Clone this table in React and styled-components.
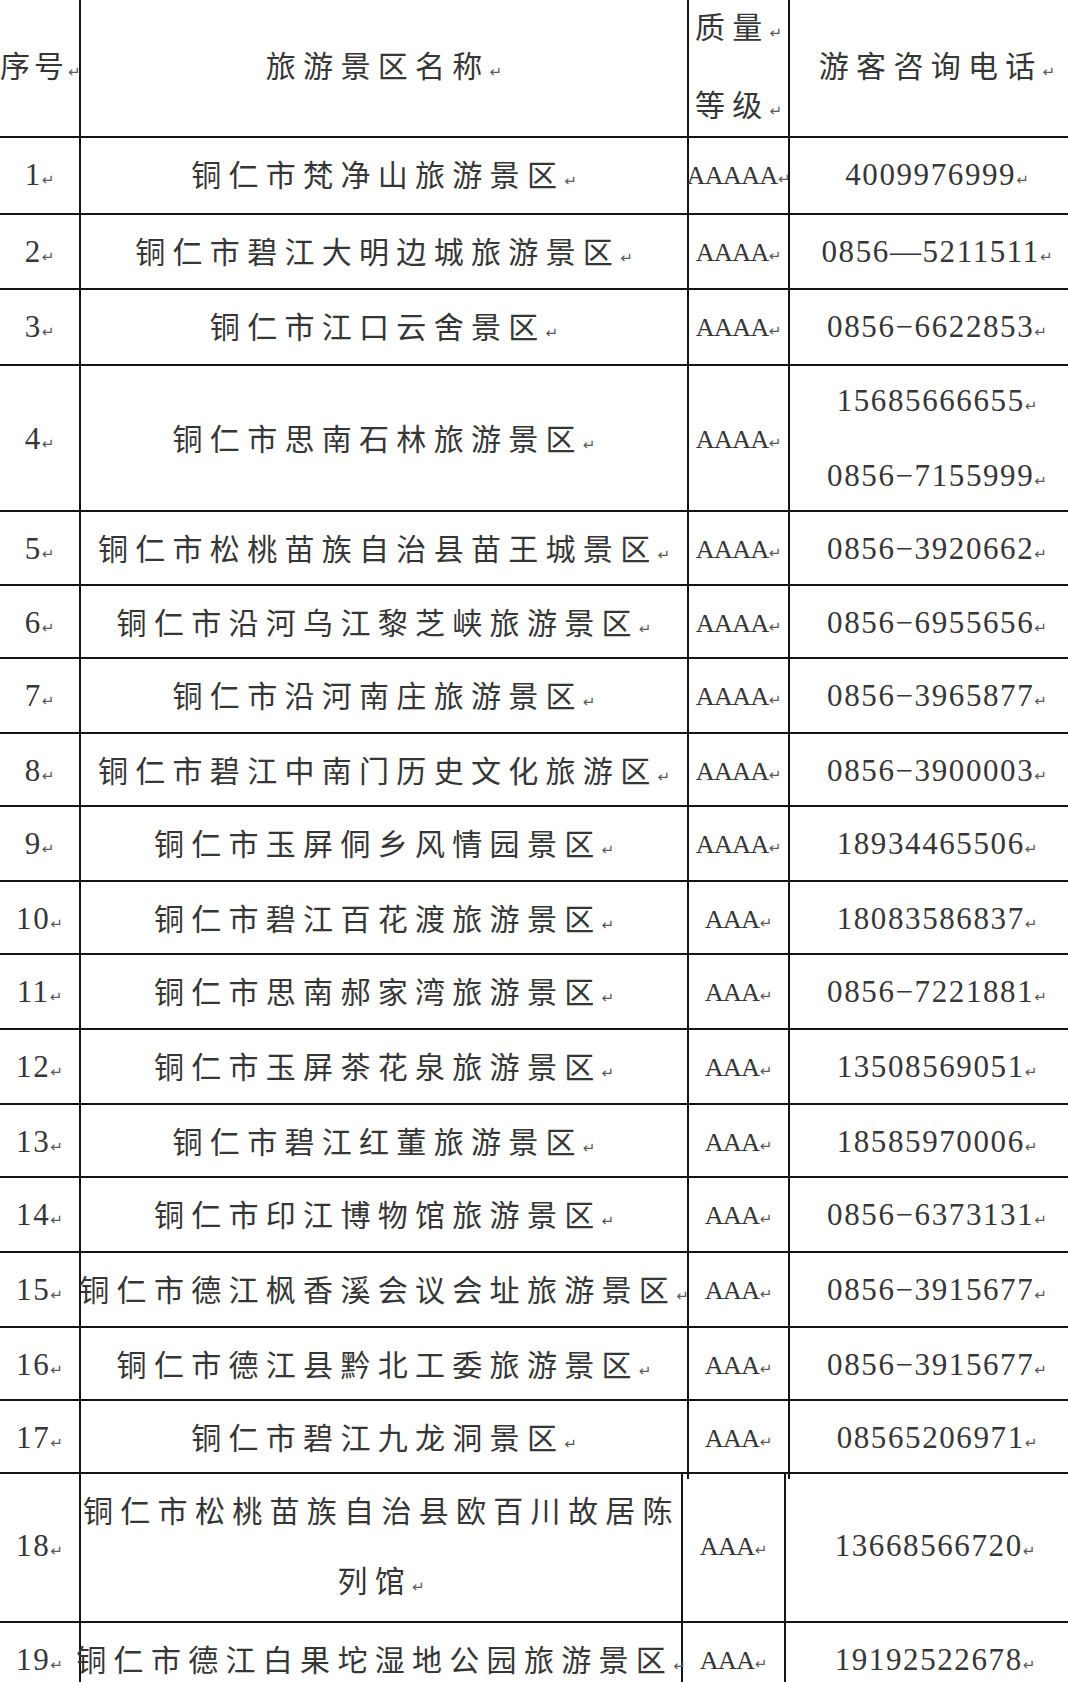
import styled, { createGlobalStyle } from 'styled-components';

const GlobalStyle = createGlobalStyle`
    html, body {
        margin: 0;
        padding: 0;
        background: #ffffff;
        overflow: hidden;
    }
`;

const Page = styled.div`
    width: 1068px;
    height: 1682px;
    overflow: hidden;
    background: #ffffff;
`;

const Table = styled.div`
    width: 1086px;
    margin-top: -10px;
    display: flex;
    flex-direction: column;
`;

const Row = styled.div`
    display: grid;
    grid-template-columns: ${p => p.$narrow ? '81px 602px 103px 1fr' : '81px 608px 101px 1fr'};
    height: ${p => p.$h}px;
    box-sizing: border-box;
    border-bottom: 2px solid #151515;
`;

const Cell = styled.div`
    box-sizing: border-box;
    border-right: 2px solid #151515;
    display: flex;
    flex-direction: column;
    align-items: ${p => p.$align || 'center'};
    justify-content: center;
    white-space: nowrap;
    color: #363636;
    min-width: 0;
`;

const Han = styled.div`
    font-family: "Noto Sans CJK SC", "Liberation Serif", serif;
    font-size: 30px;
    letter-spacing: ${p => p.$tight ? '4px' : '7.3px'};
    line-height: 70px;
    align-self: ${p => p.$left ? 'flex-start' : 'auto'};
    padding-left: ${p => p.$left ? '2px' : '0'};
`;

const Digits = styled.div`
    font-family: "Liberation Serif", "Times New Roman", serif;
    font-size: 31px;
    letter-spacing: 1.6px;
    line-height: 70px;
`;

const Level = styled.div`
    font-family: "Liberation Serif", "Times New Roman", serif;
    font-size: 26px;
    letter-spacing: -0.5px;
    line-height: 70px;
`;

const Mark = styled.span`
    font-family: "DejaVu Sans", sans-serif;
    font-size: 15px;
    letter-spacing: 0;
    color: #5a5a5a;
`;

const rows = [
    { n: '1', name: ['铜仁市梵净山旅游景区'], level: 'AAAAA', tel: ['4009976999'], h: 77 },
    { n: '2', name: ['铜仁市碧江大明边城旅游景区'], level: 'AAAA', tel: ['0856—5211511'], h: 75 },
    { n: '3', name: ['铜仁市江口云舍景区'], level: 'AAAA', tel: ['0856−6622853'], h: 76 },
    { n: '4', name: ['铜仁市思南石林旅游景区'], level: 'AAAA', tel: ['15685666655', '0856−7155999'], h: 146 },
    { n: '5', name: ['铜仁市松桃苗族自治县苗王城景区'], level: 'AAAA', tel: ['0856−3920662'], h: 74 },
    { n: '6', name: ['铜仁市沿河乌江黎芝峡旅游景区'], level: 'AAAA', tel: ['0856−6955656'], h: 73 },
    { n: '7', name: ['铜仁市沿河南庄旅游景区'], level: 'AAAA', tel: ['0856−3965877'], h: 75 },
    { n: '8', name: ['铜仁市碧江中南门历史文化旅游区'], level: 'AAAA', tel: ['0856−3900003'], h: 73 },
    { n: '9', name: ['铜仁市玉屏侗乡风情园景区'], level: 'AAAA', tel: ['18934465506'], h: 75 },
    { n: '10', name: ['铜仁市碧江百花渡旅游景区'], level: 'AAA', tel: ['18083586837'], h: 73 },
    { n: '11', name: ['铜仁市思南郝家湾旅游景区'], level: 'AAA', tel: ['0856−7221881'], h: 75 },
    { n: '12', name: ['铜仁市玉屏茶花泉旅游景区'], level: 'AAA', tel: ['13508569051'], h: 75 },
    { n: '13', name: ['铜仁市碧江红董旅游景区'], level: 'AAA', tel: ['18585970006'], h: 73 },
    { n: '14', name: ['铜仁市印江博物馆旅游景区'], level: 'AAA', tel: ['0856−6373131'], h: 75 },
    { n: '15', name: ['铜仁市德江枫香溪会议会址旅游景区'], level: 'AAA', tel: ['0856−3915677'], h: 75 },
    { n: '16', name: ['铜仁市德江县黔北工委旅游景区'], level: 'AAA', tel: ['0856−3915677'], h: 73 },
    { n: '17', name: ['铜仁市碧江九龙洞景区'], level: 'AAA', tel: ['08565206971'], h: 73 },
    { n: '18', name: ['铜仁市松桃苗族自治县欧百川故居陈', '列馆'], level: 'AAA', tel: ['13668566720'], h: 149, narrow: true },
    { n: '19', name: ['铜仁市德江白果坨湿地公园旅游景区'], level: 'AAA', tel: ['19192522678'], h: 75, narrow: true },
];

const NameCell = ({ lines }) => (
    <Cell>
        {lines.map((line, i) => {
            const last = i === lines.length - 1;
            const wrapped = lines.length > 1 && !last;
            return (
                <Han key={i} $left={wrapped}>
                    {line}
                    {last && <Mark>↵</Mark>}
                </Han>
            );
        })}
    </Cell>
);

export default function App() {
    return (
        <Page>
            <GlobalStyle />
            <Table>
                <Row $h={148}>
                    <Cell $align="flex-start">
                        <Han $tight>序号<Mark>↵</Mark></Han>
                    </Cell>
                    <Cell>
                        <Han>旅游景区名称<Mark>↵</Mark></Han>
                    </Cell>
                    <Cell>
                        <Han>质量<Mark>↵</Mark></Han>
                        <Han>等级<Mark>↵</Mark></Han>
                    </Cell>
                    <Cell>
                        <Han>游客咨询电话<Mark>↵</Mark></Han>
                    </Cell>
                </Row>
                {rows.map(row => (
                    <Row key={row.n} $h={row.h} $narrow={row.narrow}>
                        <Cell>
                            <Digits>{row.n}<Mark>↵</Mark></Digits>
                        </Cell>
                        <NameCell lines={row.name} />
                        <Cell>
                            <Level>{row.level}<Mark>↵</Mark></Level>
                        </Cell>
                        <Cell>
                            {row.tel.map(t => (
                                <Digits key={t}>{t}<Mark>↵</Mark></Digits>
                            ))}
                        </Cell>
                    </Row>
                ))}
            </Table>
        </Page>
    );
}
